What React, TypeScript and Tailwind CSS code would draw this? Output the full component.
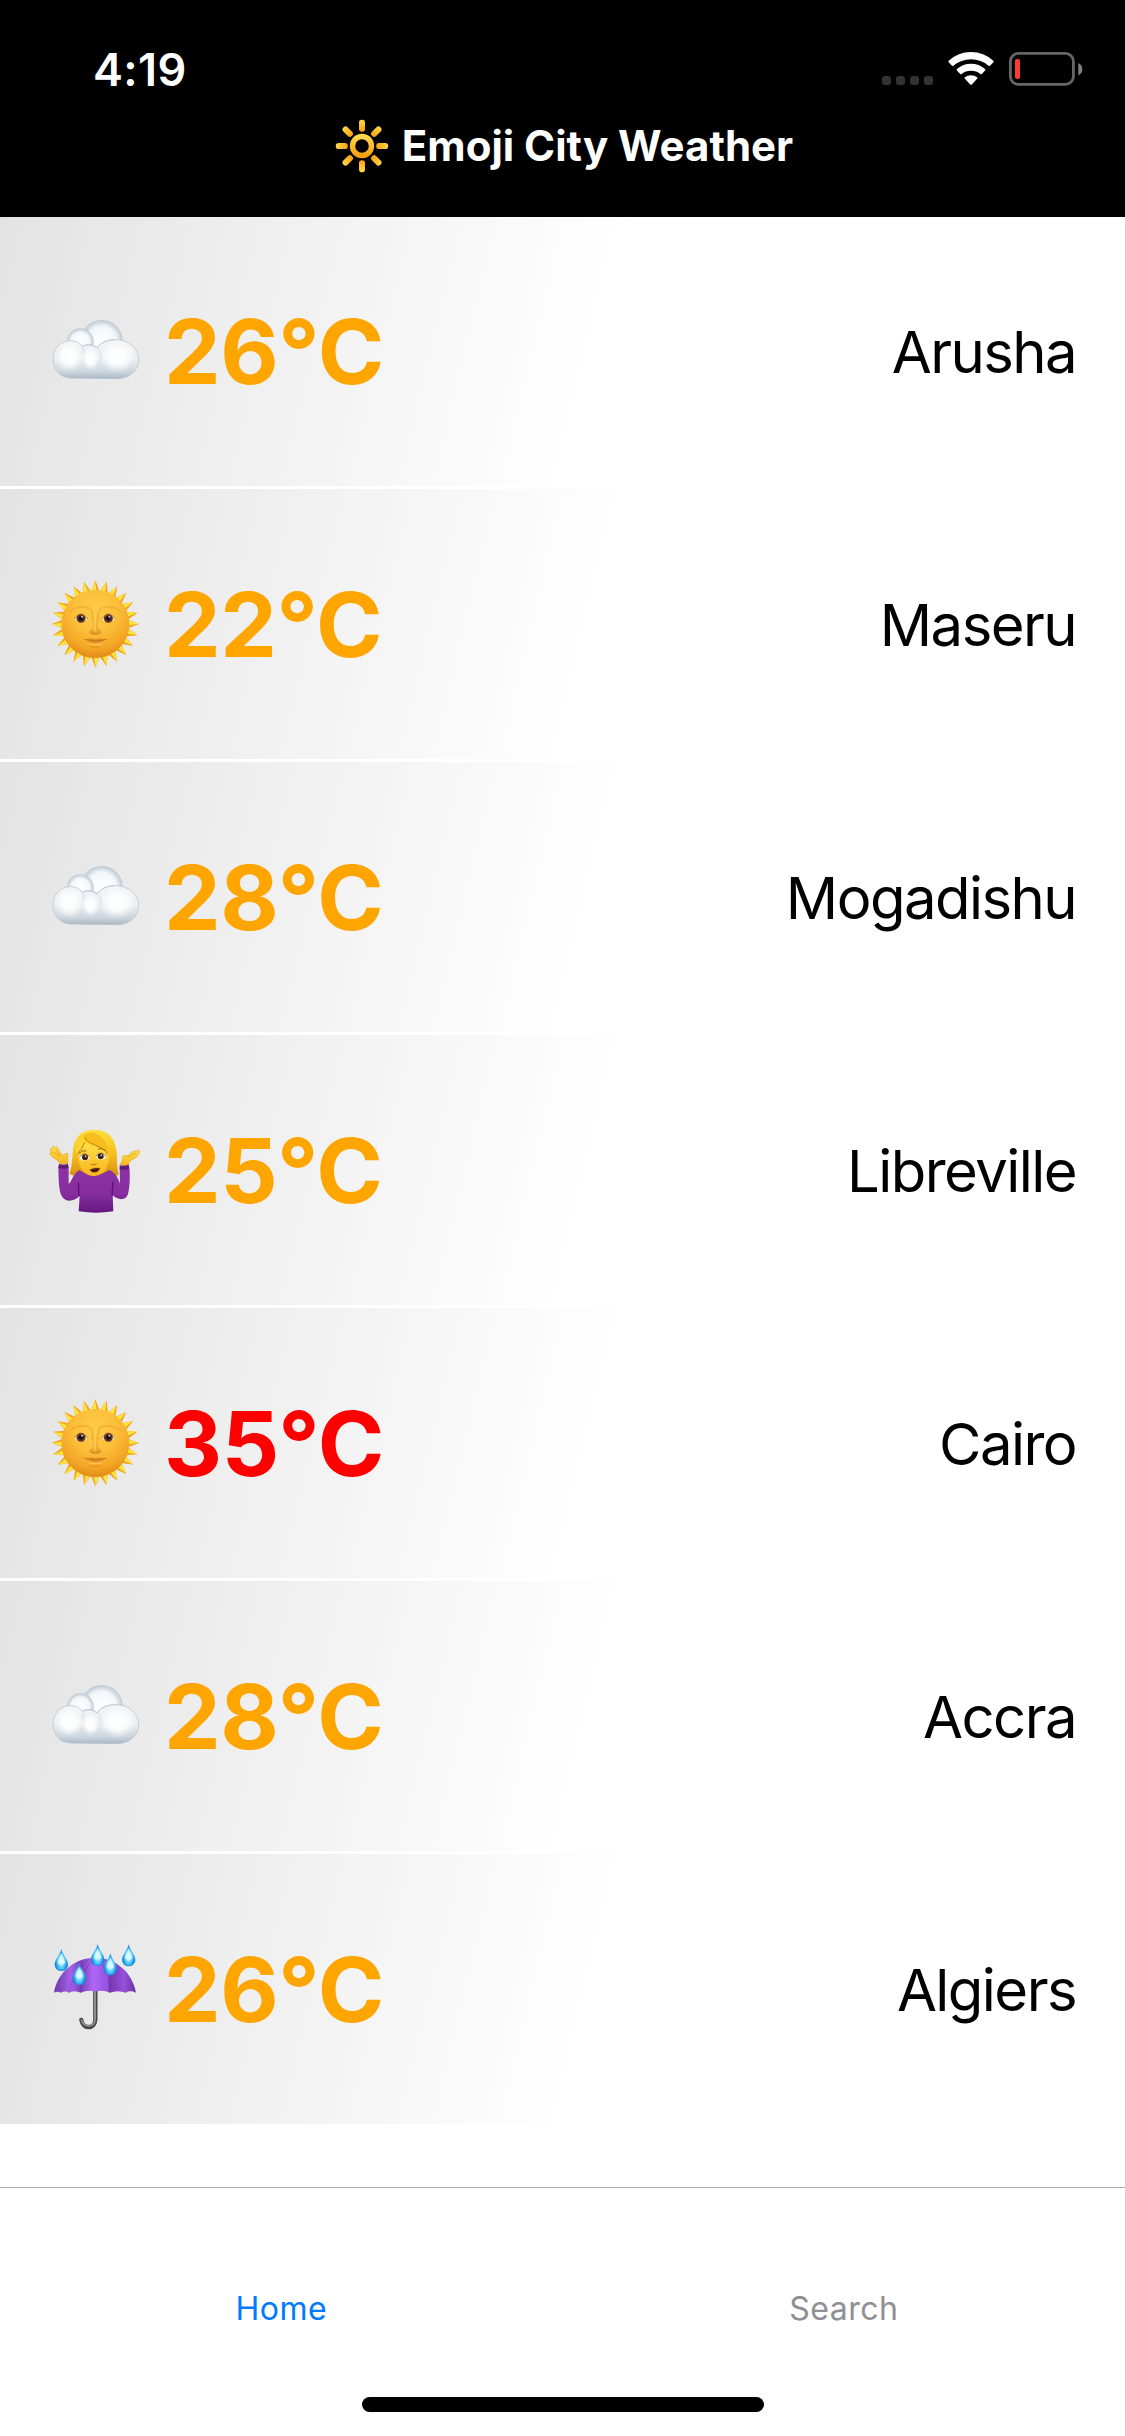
import React from "react";

function Cloud() {
  return (
    <svg viewBox="0 0 330 330" className="size-[110px] shrink-0">
      <defs>
        <linearGradient id="cl" x1="0" y1="0" x2="0" y2="1">
          <stop offset="0" stopColor="#f3f6f8" />
          <stop offset="0.5" stopColor="#e9eef2" />
          <stop offset="0.82" stopColor="#cdd6de" />
          <stop offset="1" stopColor="#a9b8c5" />
        </linearGradient>
        <radialGradient id="cp" cx="0.5" cy="0.5" r="0.5">
          <stop offset="0" stopColor="#ffffff" />
          <stop offset="0.7" stopColor="#f3f6f9" />
          <stop offset="1" stopColor="#bcc8d2" />
        </radialGradient>
        <radialGradient id="cs">
          <stop offset="0" stopColor="#ffffff" />
          <stop offset="0.5" stopColor="#ffffff" stopOpacity="0.85" />
          <stop offset="1" stopColor="#ffffff" stopOpacity="0" />
        </radialGradient>
      </defs>
      <circle cx="185" cy="132" r="63" fill="url(#cp)" />
      <circle cx="121" cy="134" r="40" fill="url(#cp)" />
      <path d="M39 187c0-32 22-56 52-56 18 0 30 7 36 17 14-8 34-5 44 5 12-17 31-25 56-25 40 0 69 27 69 59 0 35-29 58-65 58l-141-2c-30-2-51-25-51-56z" fill="url(#cl)" stroke="#b2bfcb" strokeWidth="2" />
      <path d="M127 148c14-8 34-5 44 5M171 153c10-15 30-25 56-25" fill="none" stroke="#bac6d0" strokeWidth="3" opacity=".8" />
      <path d="M127 148c5 8 4 14 2 20M175 154c8 10 10 24 9 36" fill="none" stroke="#d5dde4" strokeWidth="3" />
      <ellipse cx="88" cy="180" rx="42" ry="44" fill="url(#cs)" />
      <ellipse cx="232" cy="180" rx="54" ry="46" fill="url(#cs)" />
      <ellipse cx="152" cy="186" rx="26" ry="34" fill="url(#cs)" />
    </svg>
  );
}

const rays = Array.from({ length: 24 }, (_, i) => i * 15);

function SunFace() {
  return (
    <svg viewBox="0 0 330 330" className="size-[110px] shrink-0">
      <defs>
        <radialGradient id="sf" cx="0.5" cy="0.3" r="0.72">
          <stop offset="0" stopColor="#ffcb4a" />
          <stop offset="0.45" stopColor="#fcbf39" />
          <stop offset="0.8" stopColor="#f3a424" />
          <stop offset="1" stopColor="#dc8615" />
        </radialGradient>
        <linearGradient id="sn" x1="0" y1="0" x2="0" y2="1">
          <stop offset="0" stopColor="#d98a17" stopOpacity="0.2" />
          <stop offset="1" stopColor="#c2730f" />
        </linearGradient>
      </defs>
      {rays.map((a) => (
        <g key={a} transform={`rotate(${a} 166 162)`}>
          <path d="M152 68L166 31L180 68z" fill="#f3a321" />
          <path d="M154 68L165 33L171 68z" fill="#ffe737" />
        </g>
      ))}
      <circle cx="166" cy="162" r="102" fill="url(#sf)" />
      <path d="M92 124c12-16 50-18 62-4 4 9 4 20 3 30M240 124c-12-16-50-18-62-4-4 9-4 20-3 30" fill="none" stroke="#e39a24" strokeWidth="6" strokeLinecap="round" opacity=".4" />
      {[123, 205].map((x) => (
        <g key={x}>
          <path d={x === 123 ? "M103 147q18-24 40 0q-20 20-40 0z" : "M185 147q22-24 40 0q-20 20-40 0z"} fill="#f7e5c8" />
          <circle cx={x} cy="145" r="13.5" fill="#59342f" />
          <circle cx={x} cy="145" r="7" fill="#180d10" />
          <circle cx={x + 3} cy="140" r="3" fill="#d8c6c3" />
          <path d={x === 123 ? "M102 146q20-26 42 1" : "M184 147q22-27 42-1"} fill="none" stroke="#a8641c" strokeWidth="2.5" opacity=".8" />
        </g>
      ))}
      <path d="M158 132v45q-10 3-10 10q7 9 18 6q11 3 18-6q0-7-10-10v-45z" fill="url(#sn)" opacity=".45" />
      <path d="M161 130h8v55h-8z" fill="#ffcf55" opacity=".7" />
      <path d="M150 188q7 6 15 4q9 2 17-4" fill="none" stroke="#b96a0c" strokeWidth="2.5" strokeLinecap="round" opacity=".6" />
      <path d="M137 209q18-6 30-1q12-5 30 1q-30 22-60 0z" fill="#e08f22" />
      <path d="M134 208q32 9 65 0" fill="none" stroke="#b06713" strokeWidth="2.5" strokeLinecap="round" opacity=".75" />
      <path d="M148 221q19 6 36 0" fill="none" stroke="#fcc455" strokeWidth="4" strokeLinecap="round" />
      <path d="M152 230q14 4 28 0" fill="none" stroke="#d38317" strokeWidth="4" strokeLinecap="round" opacity=".5" />
    </svg>
  );
}

function Shrug() {
  return (
    <svg viewBox="0 3 330 330" className="size-[110px] shrink-0">
      <defs>
        <linearGradient id="wh" x1="0" y1="0" x2="0" y2="1">
          <stop offset="0" stopColor="#ffdf3d" />
          <stop offset="0.5" stopColor="#f8bd1b" />
          <stop offset="1" stopColor="#d48d0a" />
        </linearGradient>
        <linearGradient id="wf" x1="0" y1="0" x2="0" y2="1">
          <stop offset="0" stopColor="#ffe045" />
          <stop offset="1" stopColor="#f8b51f" />
        </linearGradient>
        <linearGradient id="wp" x1="0" y1="0" x2="0" y2="1">
          <stop offset="0" stopColor="#8d33a6" />
          <stop offset="0.6" stopColor="#852c9f" />
          <stop offset="1" stopColor="#64187f" />
        </linearGradient>
      </defs>
      <path d="M161 44c-40 0-58 25-62 62c-3 28-3 50-11 70c20 15 130 22 149 2c-8-20-4-46-8-72c-5-38-25-62-68-62z" fill="url(#wh)" />
      <path d="M55 154q14 7 31 2l0 50c5 2 14-32 32-41q44 30 90 0c20 5 31 38 32 41l-1-49q16 3 29-2c3 32 1 62-4 82c-6 20-29 20-46 4l2 48q-52 8-104 0l3-46c-18 18-42 18-52 3c-12-16-11-58-12-92z" fill="url(#wp)" />
      <path d="M117 243l-2-40M216 242l3-42" stroke="#57156f" strokeWidth="4" fill="none" />
      <path d="M57 146q12 5 27 0l2 13q-15 5-31 0zM239 151q14 2 28-3l-1 15q-14 3-27 0z" fill="#5f1b78" />
      <path d="M59 145c-4-11-17-13-24-21c-6-6-7-12 0-11c-7-8-6-14 2-10c-4-9 3-12 8-5c3-5 8-3 10 5c5 11 8 15 15 17c8-7 16-7 13 0c-1 8 2 17 0 25q-12 5-24 0z" fill="url(#wf)" stroke="#d9940f" strokeWidth="1.5" />
      <path d="M265 149c2-13 17-16 27-25c5-5 8-11 4-12c5-5 3-8-4-5c-7 0-22 4-27 16c-8-3-18-2-17 5c0 8-3 14-8 20q13 5 25 1z" fill="url(#wf)" stroke="#d9940f" strokeWidth="1.5" />
      <path d="M40 112q12 5 19 13M48 104q6 10 14 19M288 114q-14 4-22 12" fill="none" stroke="#dc9912" strokeWidth="2" />
      <path d="M113 107c0-10 12-20 20-28c12 11 50 18 70 30c8 12 3 42-9 58c-12 18-46 22-62 4c-15-14-20-42-19-64z" fill="url(#wf)" />
      <path d="M111 119c9-12 17-24 23-37q-8-17 6-29c-24 9-37 29-36 50z" fill="#ffd32e" />
      <path d="M133 61c0 29 63 25 70 61c4-35-13-56-31-63q-20-14-39 2z" fill="#f6bd1d" />
      <path d="M134 66c4 24 60 25 69 52M134 82q-7 20-22 36" fill="none" stroke="#bf810b" strokeWidth="3" />
      <path d="M118 114q9-9 20-7M174 102q12-4 21 4" fill="none" stroke="#9a660c" strokeWidth="3" strokeLinecap="round" />
      <ellipse cx="133" cy="127" rx="15" ry="10" fill="#fffdf1" />
      <ellipse cx="183" cy="124" rx="15" ry="10" fill="#fffdf1" />
      <circle cx="135" cy="127" r="9" fill="#452115" />
      <circle cx="182" cy="124" r="9" fill="#452115" />
      <circle cx="137" cy="124" r="2.3" fill="#fff" />
      <circle cx="184" cy="121" r="2.3" fill="#fff" />
      <path d="M118 127q14-20 30-2M168 123q14-18 30 1" fill="none" stroke="#5a3210" strokeWidth="2" />
      <path d="M153 147q8 5 16-1" fill="none" stroke="#cf7e12" strokeWidth="3.5" strokeLinecap="round" />
      <path d="M149 164q16-8 31-4q-4 12-17 12q-10 0-14-8z" fill="#3d1710" stroke="#a95312" strokeWidth="1.5" />
    </svg>
  );
}

const drops = [
  [64, 57],
  [173, 42],
  [118, 99],
  [211, 70],
  [266, 43],
];

function Umbrella() {
  return (
    <svg viewBox="0 15 330 330" className="size-[110px] shrink-0">
      <defs>
        <linearGradient id="uc" x1="0" x2="1" y1="0" y2="0">
          <stop offset="0" stopColor="#6d35a5" />
          <stop offset="0.2" stopColor="#a463ea" />
          <stop offset="0.33" stopColor="#7a3fb8" />
          <stop offset="0.48" stopColor="#b067f8" />
          <stop offset="0.66" stopColor="#9450dc" />
          <stop offset="0.68" stopColor="#7438ae" />
          <stop offset="0.85" stopColor="#9651dc" />
          <stop offset="1" stopColor="#6a329f" />
        </linearGradient>
        <radialGradient id="ud" cx="0.5" cy="0.55" r="0.55">
          <stop offset="0" stopColor="#e4ffff" />
          <stop offset="0.35" stopColor="#9be9ff" />
          <stop offset="0.7" stopColor="#29a5ee" />
          <stop offset="1" stopColor="#0878c8" />
        </radialGradient>
      </defs>
      <path d="M166 180v88c0 30-37 32-42 2" fill="none" stroke="#474747" strokeWidth="13" strokeLinecap="round" />
      <path d="M165 184v84c0 25-33 26-40 3" fill="none" stroke="#8d8d8d" strokeWidth="6" strokeLinecap="round" />
      <path d="M42 188C52 129 101 83 165 83s113 46 123 105q-18-8-30 0q-25-9-48 0q-22-9-44-3q-22-6-44 3q-18-9-35 0q-12-7-25 0q-10-6-20 0z" fill="url(#uc)" />
      <path d="M122 187q2-62 37-101M210 187q0-65-39-101M87 188q12-62 60-101" fill="none" stroke="#5f2a92" strokeWidth="2.5" opacity=".45" />
      {drops.map(([x, y]) => (
        <g key={x} transform={`translate(${x} ${y})`}>
          <path d="M0 0C4 18 20 31 20 47a20 19 0 0 1-40 0C-20 31-4 18 0 0z" fill="url(#ud)" />
          <path d="M0 12C3 23 10 32 11 42q-11 8-22 0C-10 32-3 23 0 12z" fill="#e0fcff" opacity=".75" />
          <ellipse cx="0" cy="57" rx="10" ry="4" fill="#52cdf6" opacity=".7" />
        </g>
      ))}
    </svg>
  );
}

function Brightness() {
  return (
    <svg viewBox="0 0 54 54" className="size-[54px]">
      <defs>
        <linearGradient id="br" x1="0" y1="0" x2="0" y2="1">
          <stop offset="0" stopColor="#ffd84c" />
          <stop offset="1" stopColor="#f9a00c" />
        </linearGradient>
      </defs>
      <circle cx="27" cy="27" r="9.5" fill="none" stroke="url(#br)" strokeWidth="5.4" />
      {[0, 45, 90, 135, 180, 225, 270, 315].map((a) => (
        <rect key={a} x="24" y="0.8" width="6" height="12" rx="2.8" fill="url(#br)" transform={`rotate(${a} 27 27)`} />
      ))}
    </svg>
  );
}

function StatusIcons() {
  return (
    <svg viewBox="0 0 204 36" className="h-9 w-[204px]">
      {[2, 16, 30, 44].map((x) => (
        <rect key={x} x={x} y="25" width="9" height="9" rx="3" fill="#333" />
      ))}
      <g fill="#fff">
        <path d="M68.6 11.3Q68 10.5 68.7 9.8Q78 1 91 1T113.3 9.8Q114 10.5 113.4 11.3L110 14.7Q109.3 15.4 108.6 14.7Q101 8.2 91 8.2T73.4 14.7Q72.7 15.4 72 14.7z" />
        <path d="M76.9 19.6Q76.2 18.8 77 18.1Q83 12.8 91 12.8T105 18.1Q105.8 18.8 105.1 19.6L101.8 22.9Q101 23.5 100.3 22.9Q96.5 19.7 91 19.7T81.7 22.9Q81 23.5 80.2 22.9z" />
        <path d="M84.7 27.6Q84 26.8 84.9 26.2Q87.4 24.3 91 24.3T97.1 26.2Q98 26.8 97.3 27.6L91.8 33.4Q91 34.2 90.2 33.4z" />
      </g>
      <rect x="130.4" y="2.4" width="63" height="31" rx="8" fill="none" stroke="#666" strokeWidth="2.8" />
      <rect x="135" y="8" width="5" height="20" rx="2" fill="#ff3b30" />
      <path d="M198.3 12q4 2 4 6.2t-4 6.2z" fill="#808080" />
    </svg>
  );
}

const cities = [
  { name: "Arusha", temp: 26, icon: Cloud },
  { name: "Maseru", temp: 22, icon: SunFace },
  { name: "Mogadishu", temp: 28, icon: Cloud },
  { name: "Libreville", temp: 25, icon: Shrug },
  { name: "Cairo", temp: 35, icon: SunFace },
  { name: "Accra", temp: 28, icon: Cloud },
  { name: "Algiers", temp: 26, icon: Umbrella },
];

export default function App() {
  return (
    <div className="flex h-[2436px] w-[1125px] flex-col overflow-hidden bg-white font-['Inter',sans-serif]">
      <header className="z-10 -mb-px h-[217px] shrink-0 bg-black text-white">
        <div className="flex h-[138px] items-center justify-between pr-[41px] pl-[93px]">
          <span className="text-[45px] leading-none font-semibold tracking-[0.4px]">4:19</span>
          <StatusIcons />
        </div>
        <div className="-mt-[19px] flex items-center justify-center gap-[13px] pl-[3px]">
          <Brightness />
          <h1 className="text-[42px] leading-none font-bold">Emoji City Weather</h1>
        </div>
      </header>
      <main className="flex flex-1 flex-col gap-[3px]">
        {cities.map(({ name, temp, icon: Icon }) => (
          <div
            key={name}
            className="flex h-[270px] shrink-0 items-center bg-[linear-gradient(103.5deg,#e3e3e3_0%,#ffffff_53%)] pt-[2px] pr-[49px] pl-10"
          >
            <Icon />
            <span
              className={`ml-[14px] text-[90px] leading-none font-bold tracking-[-0.4px] ${temp > 30 ? "text-[#ff0000]" : "text-[#ffa500]"}`}
            >
              {temp}°C
            </span>
            <span className="ml-auto text-[58px] leading-none tracking-[-1.55px] text-black">{name}</span>
          </div>
        ))}
      </main>
      <nav className="flex h-[249px] shrink-0 flex-col items-center border-t border-[#a9a9ac]">
        <div className="grid h-[209px] w-full shrink-0 grid-cols-2 pt-[105px] text-center text-[32px] leading-none tracking-[0.5px]">
          <span className="text-[#007aff]">Home</span>
          <span className="text-[#8e8e93]">Search</span>
        </div>
        <div className="h-[15px] w-[402px] shrink-0 rounded-full bg-black" />
      </nav>
    </div>
  );
}
